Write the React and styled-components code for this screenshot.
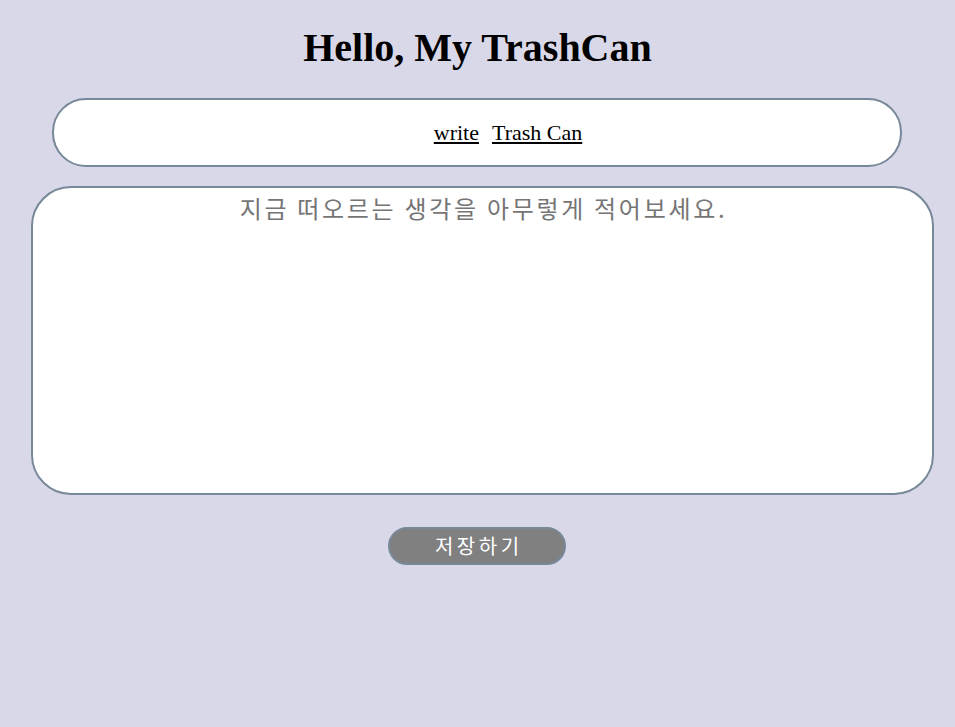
import React from "react";
import styled, { createGlobalStyle } from "styled-components";

const Global = createGlobalStyle`
  html, body { margin: 0; padding: 0; background: #d9d8e8; }
  body { font-family: "Liberation Serif", "Times New Roman", serif; }
`;

const Page = styled.div`
  min-height: 727px;
  padding: 25px 8px 0;
  box-sizing: border-box;
  display: flex;
  flex-direction: column;
  align-items: flex-start;
`;

const Title = styled.h1`
  align-self: center;
  margin: 0;
  font-size: 40px;
  line-height: 46px;
  font-weight: bold;
  color: #000;
  text-align: center;
`;

const Nav = styled.nav`
  margin: 27px 0 0 44px;
  width: 850px;
  height: 69px;
  box-sizing: border-box;
  background: #fff;
  border: 2px solid #778899;
  border-radius: 34px;
  display: flex;
  align-items: center;
  justify-content: center;
  gap: 13px;
  padding-left: 62px;
`;

const NavLink = styled.a`
  font-family: "Liberation Serif", "Times New Roman", serif;
  font-size: 22px;
  color: #000;
  text-decoration: underline;
  cursor: pointer;
`;

const Editor = styled.textarea`
  margin: 19px 0 0 23px;
  width: 903px;
  height: 309px;
  box-sizing: border-box;
  background: #fff;
  border: 2px solid #778899;
  border-radius: 40px;
  padding: 4px 20px 4px 22px;
  resize: none;
  outline: none;
  text-align: center;
  font-family: "Noto Sans CJK KR", "Noto Sans", sans-serif;
  font-size: 24px;
  line-height: 32px;
  letter-spacing: 2.7px;
  color: #333;
  &::placeholder { color: #757575; }
`;

const SaveButton = styled.button`
  margin: 32px 0 0 380px;
  width: 178px;
  height: 38px;
  box-sizing: border-box;
  background: #808080;
  color: #fff;
  border: 2px solid #778899;
  border-radius: 19px;
  font-family: "Noto Sans CJK KR", "Noto Sans", sans-serif;
  font-size: 20px;
  line-height: 1;
  letter-spacing: 3.5px;
  padding: 0 0 0 3.5px;
  cursor: pointer;
`;

export default function App() {
  return (
    <>
      <Global />
      <Page>
        <Title>Hello, My TrashCan</Title>
        <Nav>
          <NavLink>write</NavLink>
          <NavLink>Trash Can</NavLink>
        </Nav>
        <Editor placeholder="지금 떠오르는 생각을 아무렇게 적어보세요." />
        <SaveButton>저장하기</SaveButton>
      </Page>
    </>
  );
}
